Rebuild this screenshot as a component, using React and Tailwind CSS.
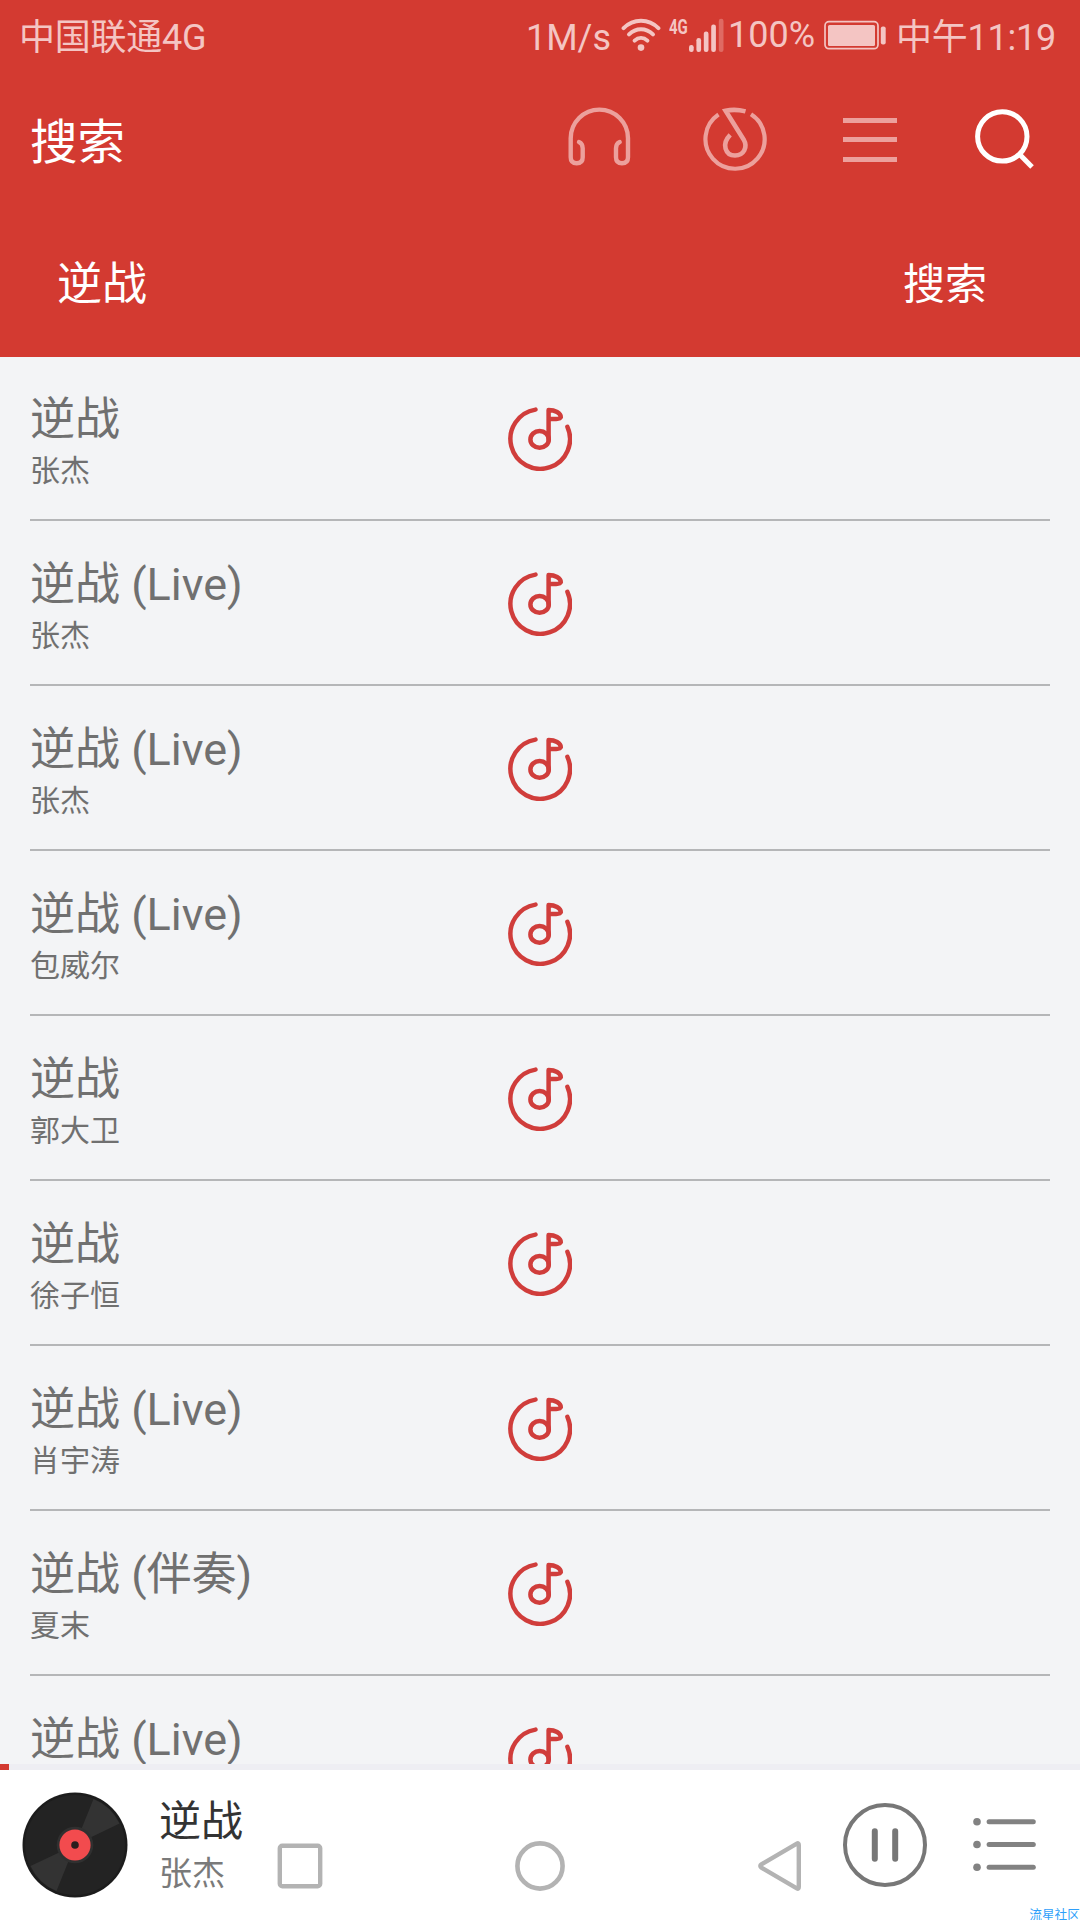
import React from 'react';

const songs = [
  { title: '逆战', artist: '张杰' },
  { title: '逆战 (Live)', artist: '张杰' },
  { title: '逆战 (Live)', artist: '张杰' },
  { title: '逆战 (Live)', artist: '包威尔' },
  { title: '逆战', artist: '郭大卫' },
  { title: '逆战', artist: '徐子恒' },
  { title: '逆战 (Live)', artist: '肖宇涛' },
  { title: '逆战 (伴奏)', artist: '夏末' },
  { title: '逆战 (Live)', artist: '' },
];

function WifiIcon() {
  return (
    <svg className="ml-[10px] h-[34px] w-[40px]" viewBox="0 0 40 34" fill="none" stroke="#f4c5c3" strokeWidth="4" strokeLinecap="round">
      <path d="M2.6 10.2C12.5 0.4 27.5 0.4 37.4 10.2" />
      <path d="M8 16.4C15 9.6 25 9.6 32 16.4" />
      <path d="M13.6 22.6C17.4 19 22.6 19 26.4 22.6" />
      <circle cx="20" cy="29.6" r="3.3" fill="#f4c5c3" stroke="none" />
    </svg>
  );
}

function SignalIcon() {
  return (
    <svg className="h-[34px] w-[36px]" viewBox="0 0 36 34" fill="#f4c5c3">
      <rect x="0" y="27" width="4.7" height="7" rx="2.2" />
      <rect x="7.4" y="20" width="4.7" height="14" rx="2.2" />
      <rect x="14.8" y="13.5" width="4.7" height="20.5" rx="2.2" />
      <rect x="22.2" y="6.5" width="4.7" height="27.5" rx="2.2" />
      <rect x="29.8" y="0.7" width="4.7" height="33.3" rx="2.2" fill="#df6a63" />
    </svg>
  );
}

function BatteryIcon() {
  return (
    <svg className="h-[30px] w-[62px]" viewBox="0 0 62 30" fill="#f4c5c3">
      <rect x="1" y="1.7" width="53" height="27" rx="4" fill="none" stroke="#f4c5c3" strokeWidth="1.7" />
      <rect x="4" y="5" width="47" height="21" rx="1.5" />
      <rect x="56.8" y="6.5" width="4.9" height="18" rx="2" />
    </svg>
  );
}

function StatusBar() {
  return (
    <div className="flex h-[76px] text-[36px] leading-[76px] text-[#f4c5c3]">
      <span className="ml-[19px] tracking-[-0.25px]">中国联通4G</span>
      <div className="ml-auto flex pr-[24px]">
        <span>1M/s</span>
        <div className="pt-[18px]"><WifiIcon /></div>
        <div className="ml-[8px] w-[20px] pt-[16px] leading-none">
          <div className="origin-left scale-x-75 text-[20px] leading-[22px] font-bold">4G</div>
        </div>
        <div className="pt-[18px]"><SignalIcon /></div>
        <span className="ml-[3px] leading-[70px]">100%</span>
        <div className="ml-[9px] pt-[20px]"><BatteryIcon /></div>
        <span className="ml-[10px] tracking-[-0.25px]">中午11:19</span>
      </div>
    </div>
  );
}

function HeadphonesIcon() {
  return (
    <svg className="h-[70px] w-[70px]" viewBox="0 0 70 70" fill="none" stroke="#eca09c" strokeWidth="4.4" strokeLinecap="round">
      <path d="M15 38C18 39.3 18.7 41.3 18.7 44.3V53.3Q18.7 59.3 12.7 59.3Q6.7 59.3 6.7 53.3V34.3A28.65 28.65 0 0 1 64 34.3V53.3Q64 59.3 58 59.3Q52 59.3 52 53.3V44.3C52 41.3 52.7 39.3 55.7 38" />
    </svg>
  );
}

function DiscNoteIcon() {
  return (
    <svg className="h-[70px] w-[70px]" viewBox="0 0 70 70" fill="none" stroke="#eca09c" strokeWidth="4.2">
      <path d="M18.5 10.6A29.6 29.6 0 1 0 51 10.2" />
      <path d="M45.5 7.4Q35 4.6 25.6 6.8L43.6 35.4C48 43 44 51.5 35 51.5C25.5 51.5 21 40 30.2 30.8" strokeWidth="4.6" />
    </svg>
  );
}

function SearchIcon() {
  return (
    <svg className="h-[70px] w-[70px]" viewBox="0 0 70 70" fill="none" stroke="#fff" strokeWidth="5">
      <circle cx="35.3" cy="32.4" r="24.7" />
      <path d="M52.5 50.2L65 63" />
    </svg>
  );
}

function Header() {
  return (
    <header className="relative z-10 h-[357px] shrink-0 bg-[#d33a31] text-white">
      <StatusBar />
      <div className="flex h-[134px] items-start">
        <h1 className="ml-[30px] w-[534px] text-[47.5px] leading-[134px] font-normal">搜索</h1>
        <div className="flex pt-[28px]">
          <HeadphonesIcon />
          <div className="ml-[66px]"><DiscNoteIcon /></div>
          <div className="mt-[13.5px] ml-[73px] flex w-[54px] flex-col gap-[14.5px]">
            <div className="h-[5px] bg-[#eca09c]" />
            <div className="h-[5px] bg-[#eca09c]" />
            <div className="h-[5px] bg-[#eca09c]" />
          </div>
          <div className="ml-[70px]"><SearchIcon /></div>
        </div>
      </div>
      <div className="flex h-[147px] justify-between pr-[93px] pl-[57px] leading-[149px]">
        <span className="text-[45px]">逆战</span>
        <button className="text-[42px]">搜索</button>
      </div>
    </header>
  );
}

function MusicIcon() {
  return (
    <svg className="h-[64px] w-[64px]" viewBox="0 0 64 64" fill="none" stroke="#d03d3b" strokeWidth="4.5" strokeLinecap="round" strokeLinejoin="round">
      <path d="M27.5 2.6A29.8 29.8 0 1 0 59.4 19.8" />
      <ellipse cx="31.6" cy="32.4" rx="9.2" ry="8.3" />
      <path d="M40.6 32.8V3C47 3 52.8 6 52.8 10.2C51.5 12.6 46.5 12 40.6 12" />
    </svg>
  );
}

function SongRow({ song }) {
  return (
    <li className="mx-[30px] grid h-[165px] shrink-0 grid-cols-[1fr_64px_1fr] border-b-2 border-[#b5b6b8] text-[#707070]">
      <div className="pt-[37px] whitespace-nowrap">
        <div className="text-[45px] leading-[54px]">{song.title}</div>
        <div className="mt-[6px] text-[30px] leading-[36px]">{song.artist}</div>
      </div>
      <div className="pt-[51px]"><MusicIcon /></div>
    </li>
  );
}

function VinylIcon() {
  return (
    <svg className="h-[106px] w-[106px]" viewBox="0 0 106 106">
      <circle cx="53" cy="53" r="52.5" fill="#1c1c1c" />
      <circle cx="53" cy="53" r="50" fill="#232323" />
      <path d="M53 53L71.5 7A49.5 49.5 0 0 1 97.5 31.5ZM53 53L34.5 99A49.5 49.5 0 0 1 8.5 74Z" fill="#333" />
      <circle cx="53" cy="53" r="18.3" fill="#303030" />
      <circle cx="53" cy="53" r="15.6" fill="#f24b4e" />
      <circle cx="53" cy="53" r="3.8" fill="#2b1d1d" />
    </svg>
  );
}

function PlayerBar() {
  return (
    <footer className="h-[156px] shrink-0 bg-white">
      <div className="h-[6px] bg-[#eeeef3]">
        <div className="h-full w-[9px] bg-[#d33a31]" />
      </div>
      <div className="flex h-[150px] items-center">
        <div className="ml-[21.5px] h-[107px]"><VinylIcon /></div>
        <div className="ml-[31.5px] w-[682px] self-start pt-[25px]">
          <div className="text-[42px] leading-[54px] text-[#333]">逆战</div>
          <div className="mt-[5px] text-[33px] leading-[40px] text-[#7a7a7a]">张杰</div>
        </div>
        <svg className="h-[88px] w-[88px]" viewBox="0 0 88 88" fill="none" stroke="#777" strokeLinecap="round">
          <circle cx="44" cy="44" r="40" strokeWidth="4" />
          <path d="M33.8 30.3V57.7M54.2 30.3V57.7" strokeWidth="6" />
        </svg>
        <svg className="ml-[43px] h-[60px] w-[66px]" viewBox="0 0 66 60" fill="#828282">
          <circle cx="5" cy="6.8" r="3.8" />
          <circle cx="5" cy="29.5" r="3.8" />
          <circle cx="5" cy="52.2" r="3.8" />
          <rect x="14.6" y="4.3" width="49.2" height="5" rx="2.5" />
          <rect x="14.6" y="27" width="49.2" height="5" rx="2.5" />
          <rect x="14.6" y="49.7" width="49.2" height="5" rx="2.5" />
        </svg>
      </div>
    </footer>
  );
}

/* System navigation keys float above the player bar. */
function NavKeys() {
  return (
    <div className="pointer-events-none absolute bottom-0 left-[180px] grid h-[108px] w-[720px] grid-cols-3 place-items-center">
      <svg className="h-[46px] w-[46px]" viewBox="0 0 46 46" fill="none" stroke="#b3b3b3" strokeWidth="4.4">
        <rect x="2.8" y="2.8" width="40.4" height="40.4" rx="2.5" />
      </svg>
      <svg className="h-[50px] w-[50px]" viewBox="0 0 50 50" fill="none" stroke="#b3b3b3" strokeWidth="4.6">
        <circle cx="25" cy="25" r="22.6" />
      </svg>
      <svg className="h-[52px] w-[48px]" viewBox="0 0 48 52" fill="none" stroke="#b3b3b3" strokeWidth="4.4">
        <path d="M40.8 3.6Q42.8 2.6 42.8 5V47Q42.8 49.4 40.8 48.4L5.4 27.6Q3.2 26 5.4 24.4Z" />
      </svg>
    </div>
  );
}

export default function App() {
  return (
    <div className="relative flex h-[1920px] w-[1080px] flex-col overflow-hidden bg-[#f3f4f6] font-['Roboto','Noto_Sans_CJK_SC',sans-serif]">
      <Header />
      <ul className="-mt-px flex min-h-0 flex-1 flex-col overflow-hidden">
        {songs.map((song, i) => (
          <SongRow key={i} song={song} />
        ))}
      </ul>
      <PlayerBar />
      <NavKeys />
      <div className="absolute right-0 bottom-[-4px] text-[12.7px] leading-[18px] whitespace-nowrap text-[#2f9ffa]">流星社区</div>
    </div>
  );
}
